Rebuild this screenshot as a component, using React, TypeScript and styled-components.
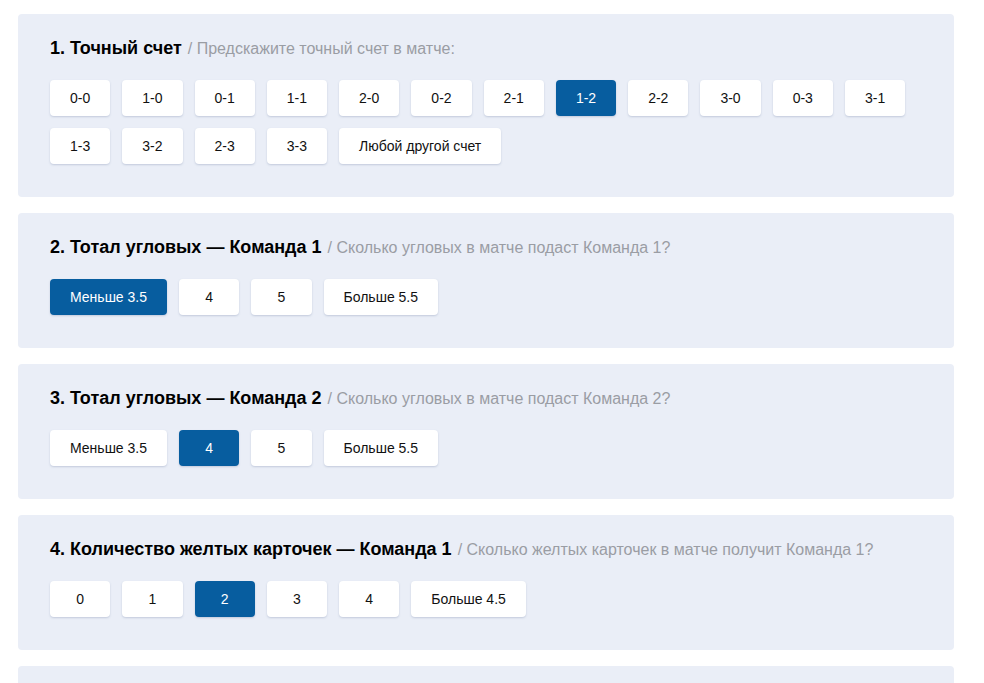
import React, { useState } from "react";
import styled, { createGlobalStyle } from "styled-components";

const Global = createGlobalStyle`
  html, body { margin: 0; padding: 0; background: #ffffff; }
  body { font-family: "Liberation Sans", Arial, sans-serif; color: #000; }
`;

const Page = styled.div`
  display: flex;
  flex-direction: column;
  gap: 16px;
  padding: 14px 30px 0 18px;
  width: 936px;
`;

const Card = styled.section`
  background: #eaeef7;
  border-radius: 4px;
  padding: 23px 32px 33px;
  display: flex;
  flex-direction: column;
  gap: 21px;
`;

const Heading = styled.div`
  display: flex;
  align-items: baseline;
  gap: 6px;
  height: 22px;
  line-height: 22px;
`;

const Title = styled.span`
  font-size: 18px;
  font-weight: 700;
  color: #000;
`;

const Hint = styled.span`
  font-size: 16px;
  color: #9a9da4;
`;

const Options = styled.div`
  display: flex;
  flex-wrap: wrap;
  gap: 12px;
`;

const Option = styled.button<{ $active?: boolean }>`
  height: 36px;
  min-width: 60.27px;
  padding: 0 20px;
  border: none;
  border-radius: 4px;
  font-family: "Liberation Sans", Arial, sans-serif;
  font-size: 14px;
  cursor: pointer;
  background: ${(p) => (p.$active ? "#075d9f" : "#ffffff")};
  color: ${(p) => (p.$active ? "#ffffff" : "#111111")};
  box-shadow: 0 1px 2px rgba(120, 135, 170, 0.35);
`;

type Q = { title: string; hint: string; options: string[]; selected: number };

const questions: Q[] = [
  {
    title: "1. Точный счет",
    hint: "/ Предскажите точный счет в матче:",
    options: ["0-0", "1-0", "0-1", "1-1", "2-0", "0-2", "2-1", "1-2", "2-2", "3-0", "0-3", "3-1", "1-3", "3-2", "2-3", "3-3", "Любой другой счет"],
    selected: 7,
  },
  {
    title: "2. Тотал угловых — Команда 1",
    hint: "/ Сколько угловых в матче подаст Команда 1?",
    options: ["Меньше 3.5", "4", "5", "Больше 5.5"],
    selected: 0,
  },
  {
    title: "3. Тотал угловых — Команда 2",
    hint: "/ Сколько угловых в матче подаст Команда 2?",
    options: ["Меньше 3.5", "4", "5", "Больше 5.5"],
    selected: 1,
  },
  {
    title: "4. Количество желтых карточек — Команда 1",
    hint: "/ Сколько желтых карточек в матче получит Команда 1?",
    options: ["0", "1", "2", "3", "4", "Больше 4.5"],
    selected: 2,
  },
  {
    title: "5. Количество желтых карточек — Команда 2",
    hint: "/ Сколько желтых карточек в матче получит Команда 2?",
    options: ["0", "1", "2", "3", "4", "Больше 4.5"],
    selected: 3,
  },
];

function Question({ q }: { q: Q }) {
  const [sel, setSel] = useState(q.selected);
  return (
    <Card>
      <Heading>
        <Title>{q.title}</Title>
        <Hint>{q.hint}</Hint>
      </Heading>
      <Options>
        {q.options.map((o, i) => (
          <Option key={o} $active={i === sel} onClick={() => setSel(i)}>
            {o}
          </Option>
        ))}
      </Options>
    </Card>
  );
}

export default function App() {
  return (
    <>
      <Global />
      <Page>
        {questions.map((q) => (
          <Question key={q.title} q={q} />
        ))}
      </Page>
    </>
  );
}
